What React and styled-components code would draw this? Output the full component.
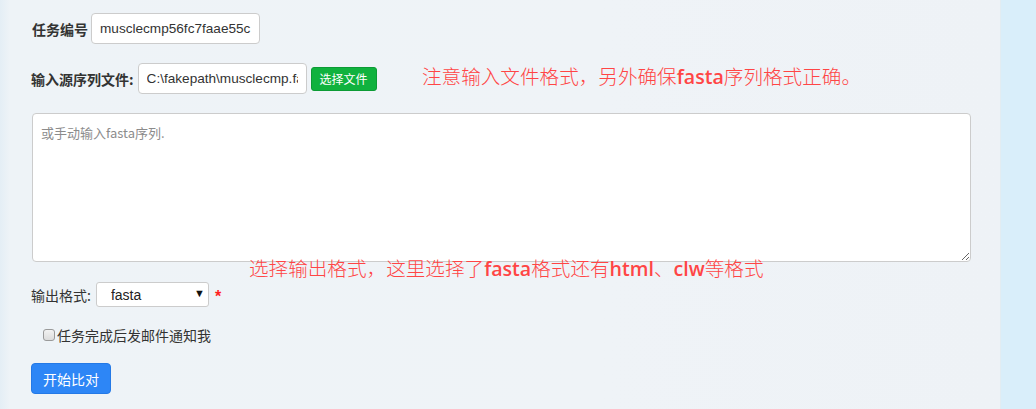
import React from "react";
import styled, { createGlobalStyle } from "styled-components";

const GlobalStyle = createGlobalStyle`
    html, body {
        margin: 0;
        padding: 0;
    }
    body {
        font-family: "Liberation Sans", "Noto Sans CJK SC", sans-serif;
        font-size: 14px;
        color: #333;
    }
`;

const Page = styled.div`
    display: flex;
    width: 1036px;
    height: 409px;
    overflow: hidden;
    background: #d9eefa;
`;

const Panel = styled.div`
    position: relative;
    width: 1001px;
    flex-shrink: 0;
    padding: 13px 0 0 31px;
    box-sizing: border-box;
    background: linear-gradient(90deg, #e4eef5 0px, #eef3f7 10px, #eff3f7 60%, #eef2f6 100%);
    border-right: 1px solid #e2ecf2;
`;

const Row = styled.div`
    display: flex;
    align-items: center;
    gap: ${props => props.$gap || 4}px;
    margin-bottom: ${props => props.$mb || 0}px;
    height: ${props => props.$h || 31}px;
`;

const Label = styled.label`
    font-family: "Noto Sans CJK SC", sans-serif;
    font-size: 14px;
    font-weight: ${props => props.$bold ? 700 : 400};
    color: #333;
    margin-left: ${props => props.$ml || 0}px;
    white-space: nowrap;
`;

const TextInput = styled.input`
    width: ${props => props.$w}px;
    height: 31px;
    box-sizing: border-box;
    padding: 0 8px;
    font-family: "Liberation Sans", "Noto Sans CJK SC", sans-serif;
    font-size: 13.6px;
    color: #333;
    background: #fff;
    border: 1px solid #ccc;
    border-radius: 4px;
    outline: none;
`;

const FileButton = styled.button`
    height: 24px;
    padding: 0 8px;
    font-family: "Noto Sans CJK SC", sans-serif;
    font-size: 12px;
    color: #fff;
    background: #10b23e;
    border: 1px solid #0c9b35;
    border-radius: 3px;
    cursor: pointer;
`;

const SourceArea = styled.textarea`
    display: block;
    width: 939px;
    height: 149px;
    margin: 0 0 20px 1px;
    box-sizing: border-box;
    padding: 9px 8px;
    font-family: "Noto Sans CJK SC", sans-serif;
    font-size: 13px;
    color: #333;
    background: #fff;
    border: 1px solid #ccc;
    border-radius: 4px;
    outline: none;
    resize: both;

    &::placeholder {
        color: #8c8c8c;
    }
`;

const SelectWrap = styled.div`
    position: relative;
    display: inline-flex;
`;

const Select = styled.select`
    appearance: none;
    width: 113px;
    height: 25px;
    box-sizing: border-box;
    padding: 0 0 0 14px;
    font-family: "Liberation Sans", sans-serif;
    font-size: 14px;
    color: #222;
    background: #fff;
    border: 1px solid #ccc;
    border-radius: 3px;
    outline: none;
`;

const Arrow = styled.span`
    position: absolute;
    right: 4px;
    top: 6px;
    font-size: 11px;
    line-height: 11px;
    color: #111;
    pointer-events: none;
`;

const Required = styled.span`
    color: #ff1f1f;
    font-size: 16px;
    font-weight: 700;
    margin-left: 1px;
    padding-top: 4px;
`;

const CheckRow = styled.label`
    display: flex;
    align-items: center;
    gap: 2px;
    height: 20px;
    margin: 18px 0 18px 12px;
    font-family: "Noto Sans CJK SC", sans-serif;
    font-size: 14px;
    color: #333;
`;

const Check = styled.input`
    appearance: none;
    width: 12px;
    height: 12px;
    margin: 0;
    box-sizing: border-box;
    border: 1px solid #9a9a9a;
    border-radius: 3px;
    background: linear-gradient(#f2f2f2, #dcdcdc);
`;

const SubmitButton = styled.button`
    height: 31px;
    padding: 0 11px;
    font-family: "Noto Sans CJK SC", sans-serif;
    font-size: 14px;
    color: #fff;
    background: #2d86f6;
    border: 1px solid #2479e6;
    border-radius: 4px;
    cursor: pointer;
`;

const Note = styled.div`
    position: absolute;
    left: ${props => props.$x}px;
    top: ${props => props.$y}px;
    font-family: "Noto Sans CJK SC", sans-serif;
    font-size: 19.6px;
    font-weight: 300;
    line-height: 24px;
    color: #ff4545;
    white-space: nowrap;

    b {
        font-family: "Open Sans", sans-serif;
        font-weight: 600;
    }
`;

export default function App() {
    return (
        <>
            <GlobalStyle />
            <Page>
                <Panel>
                    <Row $mb={19} $gap={3}>
                        <Label $bold $ml={1}>任务编号</Label>
                        <TextInput $w={169} defaultValue="musclecmp56fc7faae55c" />
                    </Row>
                    <Row $mb={19}>
                        <Label $bold>输入源序列文件:</Label>
                        <TextInput $w={169} defaultValue="C:\fakepath\musclecmp.fasta" />
                        <FileButton>选择文件</FileButton>
                    </Row>
                    <SourceArea placeholder="或手动输入fasta序列." />
                    <Row $h={25} $gap={5}>
                        <Label>输出格式:</Label>
                        <SelectWrap>
                            <Select defaultValue="fasta">
                                <option value="fasta">fasta</option>
                                <option value="html">html</option>
                                <option value="clw">clw</option>
                            </Select>
                            <Arrow>▼</Arrow>
                        </SelectWrap>
                        <Required>*</Required>
                    </Row>
                    <CheckRow>
                        <Check type="checkbox" />
                        任务完成后发邮件通知我
                    </CheckRow>
                    <SubmitButton>开始比对</SubmitButton>

                    <Note $x={422} $y={64}>
                        注意输入文件格式，另外确保<b>fasta</b>序列格式正确。
                    </Note>
                    <Note $x={249} $y={256}>
                        选择输出格式，这里选择了<b>fasta</b>格式还有<b>html</b>、<b>clw</b>等格式
                    </Note>
                </Panel>
            </Page>
        </>
    );
}
